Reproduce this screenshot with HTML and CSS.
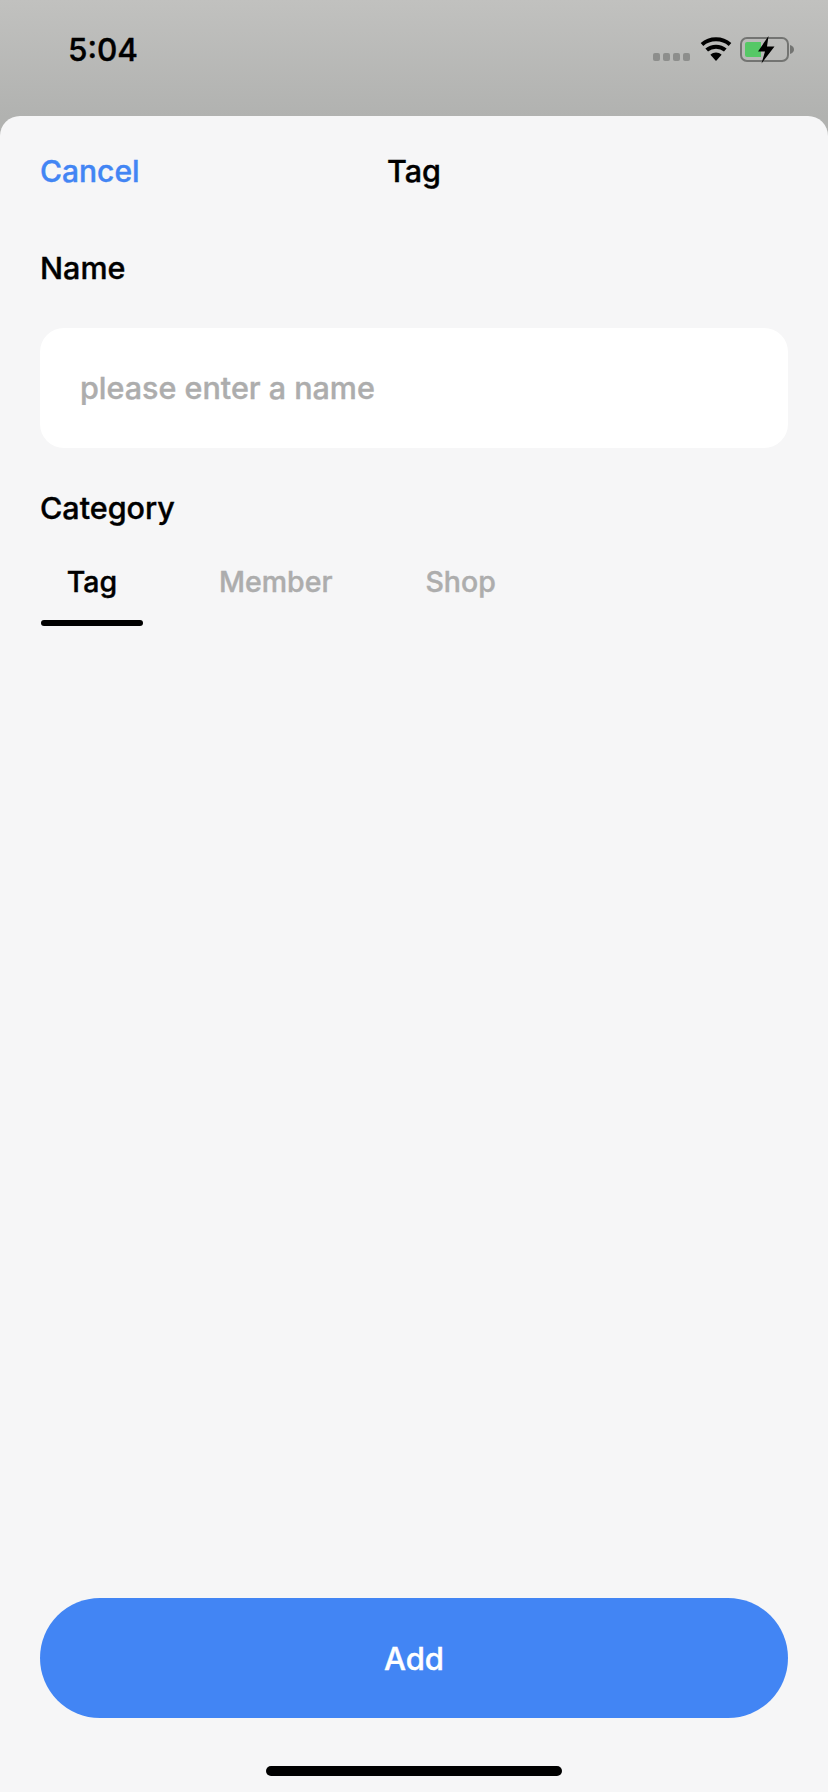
FILE: index.html
```html
<!DOCTYPE html>
<html lang="en">
<head>
<meta charset="utf-8">
<title>Tag</title>
<link rel="stylesheet" href="styles.css">
</head>
<body>
<div class="screen">
  <header class="status">
    <span class="time">5:04</span>
    <div class="status-icons">
      <div class="signal"><i></i><i></i><i></i><i></i></div>
      <svg class="wifi" width="32" height="24" viewBox="0 0 32 24"><path d="M16 24 10.400 17.700C13.600 14.900 18.400 14.900 21.600 17.700Z" fill="#000"/><path d="M6.700 13.100C11.900 8.500 20.100 8.500 25.300 13.100M2 7.400C9.800 .6 22.200 .6 30 7.400" fill="none" stroke="#000" stroke-width="4"/></svg>
      <svg class="battery" width="54" height="28" viewBox="0 0 54 28"><rect x="1" y="2" width="47" height="23" rx="6" fill="none" stroke="#737472" stroke-width="2"/><path d="M5 8a2 2 0 0 1 2-2h14v15H7a2 2 0 0 1-2-2Z" fill="#56c866"/><path d="M50 9c2.500.5 4 2.500 4 4.500s-1.500 4-4 4.500Z" fill="#737472"/><path d="M28.500 0 18 15.500h7L21.500 27.500 34.500 10.500h-7.500Z" fill="#000"/></svg>
    </div>
  </header>
  <main class="sheet">
    <nav class="topbar">
      <span class="cancel">Cancel</span>
      <h1 class="title">Tag</h1>
    </nav>
    <div class="label name-label">Name</div>
    <div class="input">please enter a name</div>
    <div class="label category-label">Category</div>
    <div class="tabs">
      <div class="tab active">Tag</div>
      <div class="tab">Member</div>
      <div class="tab">Shop</div>
    </div>
    <div class="spacer"></div>
    <button class="add">Add</button>
    <div class="home"></div>
  </main>
</div>
</body>
</html>
```
FILE: styles.css
```css
* { box-sizing: border-box; margin: 0; padding: 0; }
html, body { width: 828px; height: 1792px; overflow: hidden; }
body { font-family: Inter, "Noto Sans", sans-serif; font-weight: 500; -webkit-text-stroke: 0.4px currentColor; background: #b0b1af; color: #000; }
.screen { display: flex; flex-direction: column; height: 1792px; background: #b1b2b0; }
.status { height: 116px; flex: none; display: flex; justify-content: space-between; align-items: flex-start; background: linear-gradient(#c1c1bf, #b1b2b0); padding: 30px 34px 0 68px; }
.time { font-size: 31.500px; line-height: 40px; }
.status-icons { display: flex; align-items: flex-start; margin-top: 6px; }
.signal { display: flex; gap: 2.500px; margin-right: 10px; margin-top: 17px; }
.signal i { width: 7.500px; height: 8px; border-radius: 2px; background: #8d8e8c; }
.wifi { margin-right: 8px; margin-top: 1px; }
.sheet { flex: 1; display: flex; flex-direction: column; padding: 0 40px; background: #f6f6f7; border-radius: 20px 20px 0 0; }
.topbar { position: relative; height: 73px; display: flex; align-items: flex-end; justify-content: center; flex: none; }
.cancel { position: absolute; left: 0; bottom: 0; font-size: 30px; line-height: 36px; color: #4285f4; }
.title { font-size: 30.500px; line-height: 36px; font-weight: 500; }
.label { font-size: 30.500px; line-height: 36px; }
.name-label { margin-top: 61px; }
.input { margin-top: 42px; height: 120px; border-radius: 24px; background: #fff; padding-left: 40px; font-size: 30.500px; line-height: 120px; color: #adadad; }
.category-label { margin-top: 42px; }
.tabs { display: flex; margin-top: 39px; padding-left: 1px; }
.tab { font-size: 28.500px; line-height: 34px; color: #adadad; padding: 0 0 27px; margin-right: 93px; }
.tab.active { color: #000; width: 102px; margin-right: 76px; text-align: center; position: relative; }
.tab.active::after { content: ""; position: absolute; left: 0; right: 0; bottom: 0; height: 6px; border-radius: 3px; background: #000; }
.spacer { flex: 1; }
.add { flex: none; height: 120px; border: 0; border-radius: 60px; background: #4285f4; color: #fff; font: 500 31px Inter, "Noto Sans", sans-serif; }
.home { flex: none; width: 296px; height: 10px; margin: 48px auto 16px; border-radius: 5px; background: #000; }
```
